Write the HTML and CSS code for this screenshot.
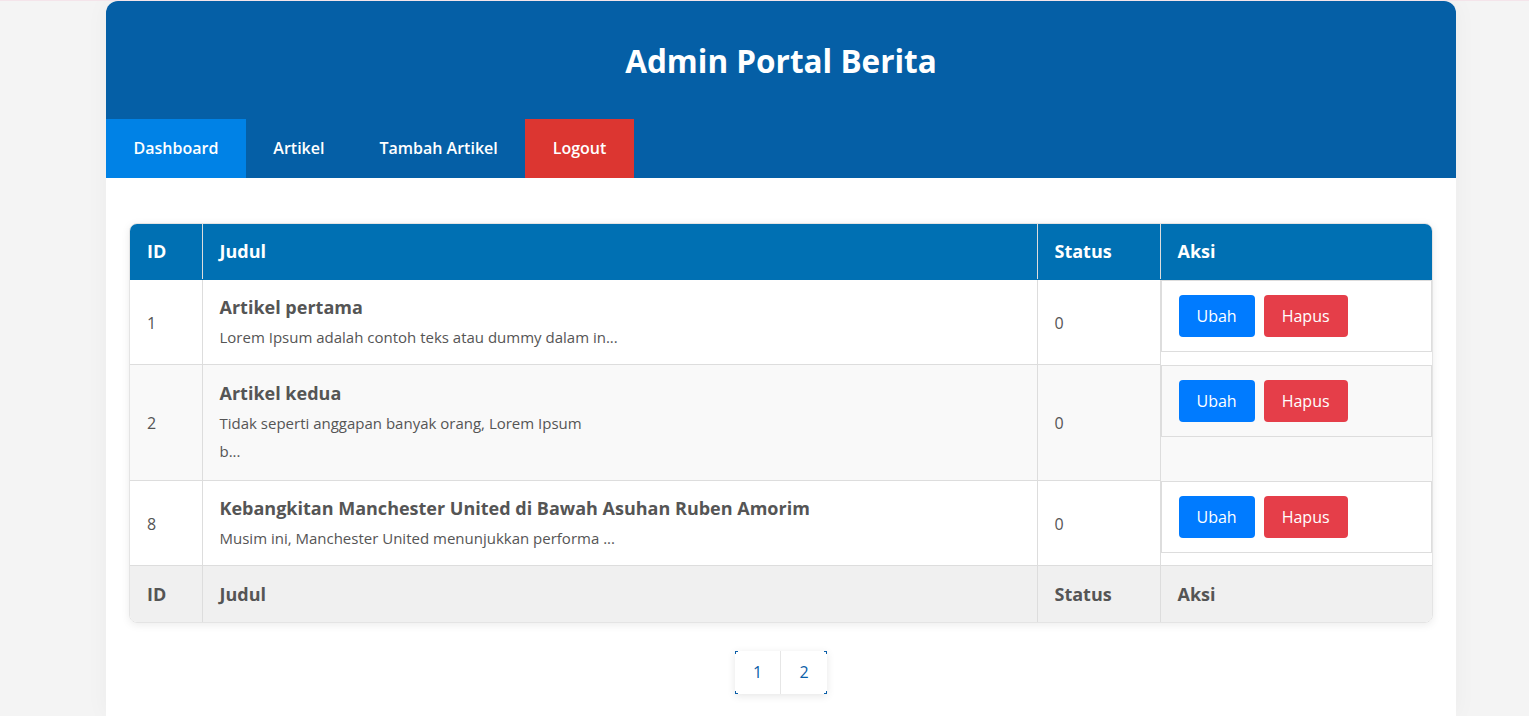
FILE: index.html
```html
<!DOCTYPE html>
<html lang="id">
<head>
<meta charset="utf-8">
<title>Admin Portal Berita</title>
<link rel="stylesheet" href="styles.css">
</head>
<body>
<div class="container">
  <header class="header">
    <h1 class="title">Admin Portal Berita</h1>
    <nav class="nav">
      <a class="nav-link active" href="#">Dashboard</a>
      <a class="nav-link" href="#">Artikel</a>
      <a class="nav-link" href="#">Tambah Artikel</a>
      <a class="nav-link logout" href="#">Logout</a>
    </nav>
  </header>
  <main class="main">
    <div class="table-wrap">
      <table class="table">
        <colgroup>
          <col class="c-id"><col class="c-judul"><col class="c-status"><col class="c-aksi">
        </colgroup>
        <thead>
          <tr><th>ID</th><th>Judul</th><th>Status</th><th>Aksi</th></tr>
        </thead>
        <tbody>
          <tr>
            <td>1</td>
            <td><div class="art-title">Artikel pertama</div><div class="art-desc">Lorem Ipsum adalah contoh teks atau dummy dalam in...</div></td>
            <td>0</td>
            <td class="aksi"><div class="actions"><a class="btn btn-edit" href="#">Ubah</a><a class="btn btn-del" href="#">Hapus</a></div></td>
          </tr>
          <tr class="alt">
            <td>2</td>
            <td><div class="art-title">Artikel kedua</div><div class="art-desc">Tidak seperti anggapan banyak orang, Lorem Ipsum<br>b...</div></td>
            <td>0</td>
            <td class="aksi"><div class="actions"><a class="btn btn-edit" href="#">Ubah</a><a class="btn btn-del" href="#">Hapus</a></div></td>
          </tr>
          <tr>
            <td>8</td>
            <td><div class="art-title">Kebangkitan Manchester United di Bawah Asuhan Ruben Amorim</div><div class="art-desc">Musim ini, Manchester United menunjukkan performa ...</div></td>
            <td>0</td>
            <td class="aksi"><div class="actions"><a class="btn btn-edit" href="#">Ubah</a><a class="btn btn-del" href="#">Hapus</a></div></td>
          </tr>
        </tbody>
        <tfoot>
          <tr><th>ID</th><th>Judul</th><th>Status</th><th>Aksi</th></tr>
        </tfoot>
      </table>
    </div>
    <div class="pagination">
      <div class="pages">
        <a class="page" href="#">1</a><a class="page" href="#">2</a>
      </div>
    </div>
  </main>
</div>
</body>
</html>
```

FILE: styles.css
```css
* { box-sizing: border-box; }
html, body { margin: 0; padding: 0; }
body {
  background: #f4f4f4;
  border-top: 1px solid #f4e4ea;
  font-family: "Open Sans", "Noto Sans", sans-serif;
  color: #555;
  height: 716px;
  overflow: hidden;
}
.container {
  width: 1350px;
  margin: 0 0 0 106px;
  background: #fff;
  border-radius: 12px 12px 0 0;
  min-height: 715px;
  box-shadow: 0 0 24px rgba(0,0,0,0.04);
}
.header {
  background: #055fa6;
  border-radius: 12px 12px 0 0;
}
.title {
  margin: 0;
  padding: 41px 0 39px;
  line-height: 38px;
  font-size: 31.5px;
  font-weight: 700;
  color: #fff;
  text-align: center;
}
.nav { display: flex; }
.nav-link {
  display: block;
  padding: 17px 27.5px 18px;
  line-height: 24px;
  font-size: 16px;
  font-weight: 600;
  color: #fff;
  text-decoration: none;
}
.nav-link.active { background: #0082e6; }
.nav-link.logout { background: #dc3631; }
.main { padding: 45px 23px 22px; }
.table-wrap {
  border-radius: 8px;
  overflow: hidden;
  border: 1px solid #e4e4e4;
  box-shadow: 0 2px 8px rgba(0,0,0,0.08);
}
.table {
  width: 100%;
  border-collapse: collapse;
  table-layout: fixed;
}
.c-id { width: 72px; }
.c-status { width: 123px; }
.c-aksi { width: 272px; }
.table th, .table td {
  border: 1px solid #dddddd;
  text-align: left;
}
.table tr > :first-child { border-left: none; }
.table tr > :last-child { border-right: none; }
.table thead tr > * { border-top: none; }
.table tfoot tr > * { border-bottom: none; }
.table th {
  padding: 15px 17px 16px;
  line-height: 24px;
  font-size: 18px;
  font-weight: 700;
}
.table thead th { background: #0070b3; color: #fff; border-color: #0070b3 #dddddd; }
.table tfoot th { background: #f0f0f0; color: #555; padding: 16px 17px; }
.table td {
  padding: 14px 17px 13px;
  font-size: 16px;
  vertical-align: middle;
}
.table tr.alt td { background: #f9f9f9; }
.table tr.alt td:nth-child(2) { padding-bottom: 15px; padding-top: 15px; }
.art-title {
  font-size: 18px;
  font-weight: 700;
  line-height: 27px;
  margin-bottom: 2px;
}
.art-desc {
  font-size: 15px;
  line-height: 28px;
}
.table td.aksi {
  padding: 0;
  vertical-align: top;
  border: none;
  border-left: 1px solid #dddddd;
}
.actions {
  display: flex;
  gap: 9px;
  padding: 14px 18px 14px 17px;
  border: 1px solid #dddddd;
}
.btn {
  display: block;
  height: 42px;
  padding: 0 18px;
  line-height: 42px;
  font-size: 16px;
  color: #fff;
  text-decoration: none;
  border-radius: 4px;
}
.btn-edit { background: #007bff; }
.btn-del { background: #e53e49; }
.pagination {
  display: flex;
  justify-content: center;
  margin-top: 28px;
}
.pages {
  display: flex;
  background-color: #fff;
  background-image:
    linear-gradient(#0a5ea8, #0a5ea8), linear-gradient(#0a5ea8, #0a5ea8),
    linear-gradient(#0a5ea8, #0a5ea8), linear-gradient(#0a5ea8, #0a5ea8),
    linear-gradient(#0a5ea8, #0a5ea8), linear-gradient(#0a5ea8, #0a5ea8),
    linear-gradient(#0a5ea8, #0a5ea8), linear-gradient(#0a5ea8, #0a5ea8);
  background-repeat: no-repeat;
  background-size: 3px 1px, 1px 3px, 3px 1px, 1px 3px, 3px 1px, 1px 3px, 3px 1px, 1px 3px;
  background-position: left top, left top, right top, right top, left bottom, left bottom, right bottom, right bottom;
  box-shadow: 0 2px 8px rgba(0,0,0,0.1);
}
.pagination .page {
  display: block;
  width: 46px;
  height: 43px;
  line-height: 43px;
  text-align: center;
  font-size: 16px;
  color: #0a5ea8;
  text-decoration: none;
}
.pagination .page:first-child { border-right: 1px solid #e6e6e6; }
```
